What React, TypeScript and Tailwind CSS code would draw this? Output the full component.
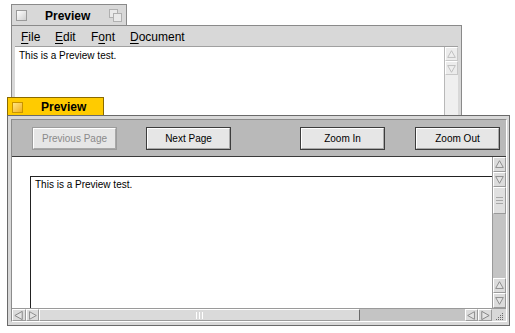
import React from "react";

const font = { fontFamily: '"Liberation Sans", Arial, sans-serif' };

function Arrow({ dir, disabled }: { dir: "up" | "down" | "left" | "right"; disabled?: boolean }) {
  const pts: Record<string, string> = {
    up: "2,10 6.5,2 11,10",
    down: "2,3 6.5,11 11,3",
    left: "10,2 2,6.5 10,11",
    right: "3,2 11,6.5 3,11",
  };
  return (
    <svg width="13" height="13" viewBox="0 0 13 13" className="block">
      <polygon
        points={pts[dir]}
        fill={disabled ? "#eeeeee" : "#e4e4e4"}
        stroke={disabled ? "#b8b8b8" : "#808080"}
        strokeWidth="1"
      />
    </svg>
  );
}

function SBtn({ dir, disabled, className = "" }: { dir: "up" | "down" | "left" | "right"; disabled?: boolean; className?: string }) {
  return (
    <div
      className={
        "flex items-center justify-center border border-t-white border-l-white " +
        (disabled ? "bg-[#ececec] border-r-[#c8c8c8] border-b-[#c8c8c8] " : "bg-[#dcdcdc] border-r-[#9a9a9a] border-b-[#9a9a9a] ") +
        className
      }
    >
      <Arrow dir={dir} disabled={disabled} />
    </div>
  );
}

function Button({ label, disabled, className = "" }: { label: string; disabled?: boolean; className?: string }) {
  return (
    <div
      className={
        "h-[23px] w-[85px] flex items-center justify-center border " +
        (disabled
          ? "border-[#9c9c9c] text-[#8a8a8a] bg-[#e6e6e6] "
          : "border-[#3c3c3c] text-black bg-[#e6e6e6] ") +
        className
      }
    >
      <div className="w-full h-full flex items-center justify-center border border-t-white border-l-white border-r-[#a8a8a8] border-b-[#a8a8a8] text-[10px]">
        {label}
      </div>
    </div>
  );
}

function MenuItem({ pre, u, post, className = "" }: { pre: string; u: string; post: string; className?: string }) {
  return (
    <span className={className}>
      {pre}
      <span className="underline underline-offset-2">{u}</span>
      {post}
    </span>
  );
}

export default function App() {
  return (
    <div className="relative w-[515px] h-[333px] bg-white overflow-hidden text-black" style={font}>
      {/* Back window */}
      <div className="absolute left-[11px] top-[4px] w-[116px] h-[22px] bg-[#d8d8d8] border border-[#8a8a8a] border-b-0 flex items-center">
        <div className="ml-[4px] w-[11px] h-[11px] border border-[#9a9a9a] bg-gradient-to-br from-white to-[#cfcfcf]" />
        <div className="ml-[18px] text-[12px] font-bold">Preview</div>
        <div className="ml-auto mr-[4px] w-[13px] h-[13px] relative">
          <div className="absolute left-0 top-0 w-[9px] h-[9px] border border-[#b0b0b0] bg-[#eaeaea]" />
          <div className="absolute right-0 bottom-0 w-[9px] h-[9px] border border-[#b0b0b0] bg-[#eaeaea]" />
        </div>
      </div>
      <div className="absolute left-[11px] top-[25px] w-[451px] h-[110px] border border-[#8a8a8a] bg-[#d8d8d8] p-[3px] flex flex-col">
        <div className="h-[18px] flex items-center text-[12px] border-b border-[#a0a0a0] bg-[#d8d8d8] pl-[6px] pb-[1px]">
          <MenuItem pre="" u="F" post="ile" className="w-[34px]" />
          <MenuItem pre="" u="E" post="dit" className="w-[36px]" />
          <MenuItem pre="F" u="o" post="nt" className="w-[39px]" />
          <MenuItem pre="" u="D" post="ocument" />
        </div>
        <div className="flex-1 flex bg-white">
          <div className="flex-1 pl-[4px] pt-[4px] text-[10px] leading-none">This is a Preview test.</div>
          <div className="w-[14px] bg-[#efefef] border-l border-[#b8b8b8] flex flex-col">
            <SBtn dir="up" disabled className="h-[14px]" />
            <SBtn dir="down" disabled className="h-[14px]" />
          </div>
        </div>
      </div>

      {/* Front window */}
      <div className="absolute left-[7px] top-[97px] w-[97px] h-[19px] bg-[#ffcb00] border border-[#8a6a00] border-b-0 flex items-center">
        <div className="ml-[4px] w-[11px] h-[11px] border border-[#c89400] bg-gradient-to-br from-[#ffe680] to-[#f0b000]" />
        <div className="ml-[18px] text-[12px] font-bold">Preview</div>
      </div>
      <div className="absolute left-[7px] top-[115px] w-[503px] h-[211px] border border-[#6a6a6a] bg-[#d8d8d8] pl-[3px] pt-[3px] pb-[3px] pr-[2px] flex flex-col">
        <div className="flex-1 flex flex-col border border-[#8c8c8c] border-r-white border-b-white">
          <div className="h-[37px] bg-[#b9b9b9] border-b border-[#3a3a3a] flex items-center pl-[20px] pr-[6px] pt-[1px]">
            <Button label="Previous Page" disabled />
            <Button label="Next Page" className="ml-[29px]" />
            <Button label="Zoom In" className="ml-auto" />
            <Button label="Zoom Out" className="ml-[30px]" />
          </div>
          <div className="flex-1 flex">
            <div className="flex-1 bg-white pl-[18px] pt-[19px] flex">
              <div className="flex-1 border-l border-t border-[#222] pl-[4px] pt-[3px] text-[10px] leading-none">
                This is a Preview test.
              </div>
            </div>
            <div className="w-[14px] bg-[#c4c4c4] border-l border-[#9a9a9a] flex flex-col">
              <SBtn dir="up" className="h-[15px]" />
              <SBtn dir="down" className="h-[15px]" />
              <div className="h-[27px] bg-[#e0e0e0] border border-t-white border-l-white border-r-[#9a9a9a] border-b-[#9a9a9a] flex flex-col items-center justify-center gap-[2px]">
                <div className="w-[7px] h-[1px] bg-[#a8a8a8]" />
                <div className="w-[7px] h-[1px] bg-[#a8a8a8]" />
                <div className="w-[7px] h-[1px] bg-[#a8a8a8]" />
              </div>
              <div className="flex-1" />
              <SBtn dir="up" className="h-[15px]" />
              <SBtn dir="down" className="h-[15px]" />
            </div>
          </div>
          <div className="h-[13px] flex border-t border-[#9a9a9a]">
            <SBtn dir="left" className="w-[14px]" />
            <SBtn dir="right" className="w-[13px]" />
            <div className="w-[321px] bg-[#dadada] border border-t-white border-l-white border-r-[#6a6a6a] border-b-[#9a9a9a] flex items-center justify-center">
              <div className="flex gap-[2px]">
                <div className="w-[1px] h-[7px] bg-white" />
                <div className="w-[1px] h-[7px] bg-white" />
                <div className="w-[1px] h-[7px] bg-white" />
              </div>
            </div>
            <div className="flex-1 bg-[#c4c4c4]" />
            <SBtn dir="left" className="w-[13px]" />
            <SBtn dir="right" className="w-[14px]" />
            <div className="w-[14px] bg-[#d8d8d8] relative">
              <svg width="14" height="13" viewBox="0 0 14 13" className="absolute inset-0">
                {[[10, 4], [8, 6], [10, 6], [6, 8], [8, 8], [10, 8], [4, 10], [6, 10], [8, 10], [10, 10]].map(([x, y], i) => (
                  <rect key={i} x={x} y={y} width="1" height="1" fill="#6a6a6a" />
                ))}
              </svg>
            </div>
          </div>
        </div>
      </div>
    </div>
  );
}
